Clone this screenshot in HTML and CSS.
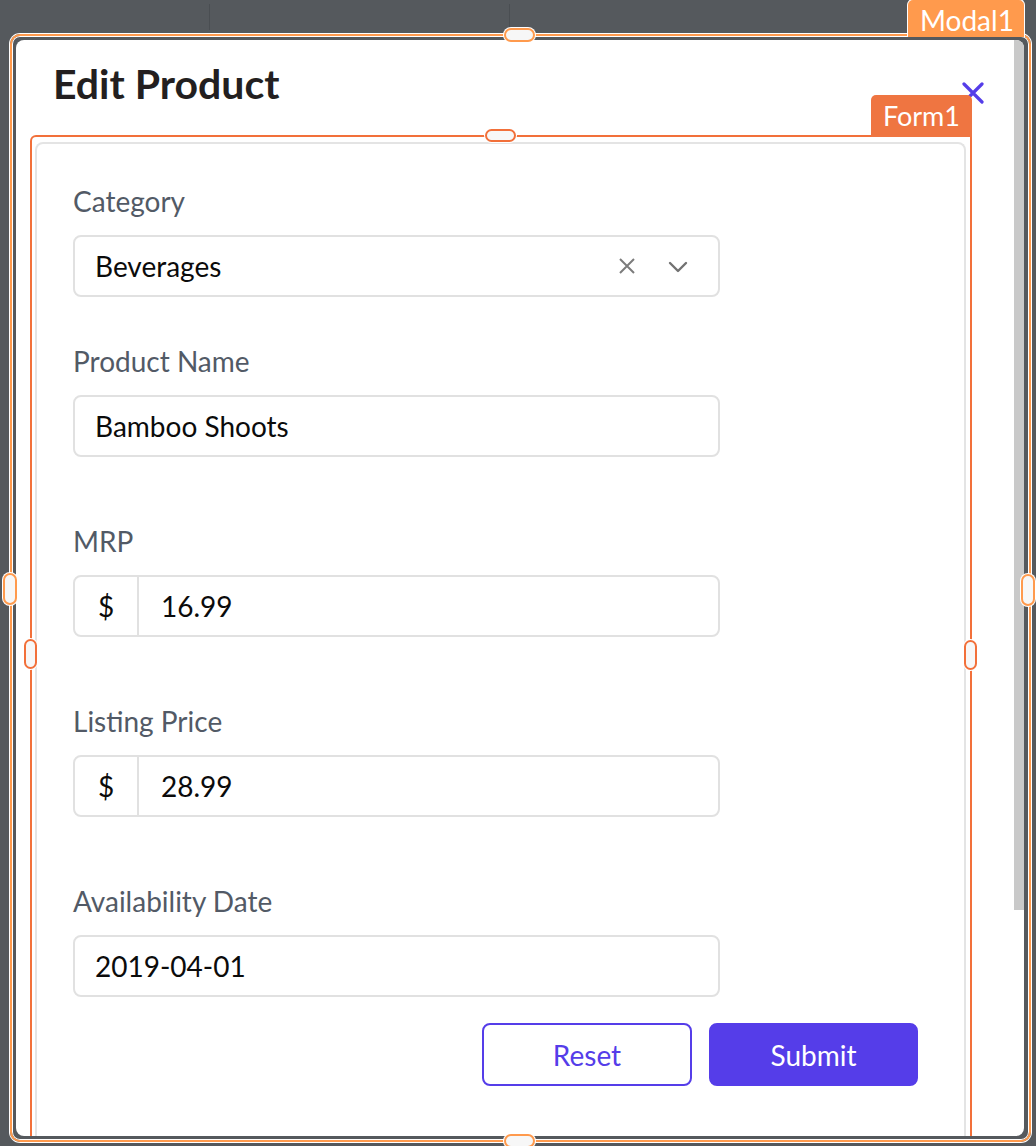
FILE: index.html
```html
<!DOCTYPE html>
<html lang="en">
<head>
<meta charset="utf-8">
<title>Edit Product</title>
<link rel="stylesheet" href="styles.css">
</head>
<body>
<div class="canvas">
  <span class="bg-line bg-line-a"></span>
  <span class="bg-line bg-line-b"></span>

  <div class="modal">
    <div class="scroll-thumb"></div>
    <div class="modal-header">
      <h1 class="title">Edit Product</h1>
      <svg class="close" width="22" height="22" viewBox="0 0 22 22"><path d="M2 2 L20 20 M20 2 L2 20" stroke="#553de9" stroke-width="3.2" stroke-linecap="round" fill="none"/></svg>
    </div>
    <div class="form-sel">
      <div class="form-tab">Form1</div>
      <div class="card">
        <div class="field field-first">
          <div class="label">Category</div>
          <div class="input">
            <span class="value">Beverages</span>
            <svg class="clear-icon" width="16" height="16" viewBox="0 0 16 16"><path d="M1 1 L15 15 M15 1 L1 15" stroke="#7c7c7c" stroke-width="2" fill="none"/></svg>
            <svg class="chev-icon" width="20" height="12" viewBox="0 0 20 12"><path d="M2 2 L10 10 L18 2" stroke="#727272" stroke-width="2.4" stroke-linecap="round" stroke-linejoin="round" fill="none"/></svg>
          </div>
        </div>
        <div class="field field-second">
          <div class="label">Product Name</div>
          <div class="input"><span class="value">Bamboo Shoots</span></div>
        </div>
        <div class="field field-rest">
          <div class="label">MRP</div>
          <div class="input">
            <span class="prefix">$</span>
            <span class="value value-prefixed">16.99</span>
          </div>
        </div>
        <div class="field field-rest">
          <div class="label">Listing Price</div>
          <div class="input">
            <span class="prefix">$</span>
            <span class="value value-prefixed">28.99</span>
          </div>
        </div>
        <div class="field field-rest">
          <div class="label">Availability Date</div>
          <div class="input"><span class="value">2019-04-01</span></div>
        </div>
        <div class="actions">
          <button class="btn btn-outline">Reset</button>
          <button class="btn btn-primary">Submit</button>
        </div>
      </div>
    </div>
  </div>

  <div class="modal-sel"></div>
  <div class="modal-tab">Modal1</div>

  <span class="handle handle-modal handle-h modal-top"></span>
  <span class="handle handle-modal handle-h modal-bottom"></span>
  <span class="handle handle-modal handle-v modal-left"></span>
  <span class="handle handle-modal handle-v modal-right"></span>
  <span class="handle handle-form handle-h form-top"></span>
  <span class="handle handle-form handle-v form-left"></span>
  <span class="handle handle-form handle-v form-right"></span>
</div>
</body>
</html>
```

FILE: styles.css
```css
* { box-sizing: border-box; }

body {
  margin: 0;
  background: #55595d;
  font-family: "Lato", "Noto Sans", sans-serif;
}

.canvas {
  position: relative;
  width: 1036px;
  height: 1146px;
  overflow: hidden;
  background: #55595d;
}

.bg-line {
  position: absolute;
  top: 4px;
  width: 1px;
  height: 26px;
  background: #4a4e52;
}
.bg-line-a { left: 209px; }
.bg-line-b { left: 509px; }

.modal {
  position: absolute;
  left: 16px;
  top: 40px;
  width: 1008px;
  height: 1096px;
  background: #fff;
  border-radius: 8px;
  overflow: hidden;
}

.scroll-thumb {
  position: absolute;
  right: 0;
  top: 0;
  width: 10px;
  height: 870px;
  background: #c9c9c9;
}

.modal-header {
  display: flex;
  justify-content: space-between;
  align-items: flex-start;
  height: 95px;
  padding: 20px 40px 0 37px;
}

.title {
  margin: 0;
  font-size: 41px;
  line-height: 48px;
  font-weight: 700;
  color: #231f20;
}

.close {
  display: block;
  margin-top: 22px;
}

.form-sel {
  position: relative;
  margin: 0 52px 0 14px;
  border: 2px solid #f2703a;
  border-bottom: none;
  border-radius: 6px 0 0 0;
  padding: 5px 4px 0 3px;
}

.form-tab {
  position: absolute;
  right: -2px;
  top: -42px;
  height: 42px;
  padding: 0 12px;
  background: #ef7541;
  color: #fff;
  font-size: 27px;
  line-height: 42px;
  border-radius: 5px 5px 0 0;
}

.card {
  border: 2px solid #e4e4e4;
  border-bottom: none;
  border-radius: 8px 8px 0 0;
  padding: 41px 36px 120px 36px;
  background: #fff;
}

.field { display: flex; flex-direction: column; }
.field-second { margin-top: 48px; }
.field-rest { margin-top: 68px; }

.label {
  font-size: 28px;
  line-height: 32px;
  color: #525a66;
  margin-bottom: 18px;
}

.input {
  display: flex;
  align-items: center;
  width: 647px;
  height: 62px;
  border: 2px solid #e1e1e1;
  border-radius: 8px;
  font-size: 28px;
  color: #0b0b0b;
  padding-right: 30px;
}

.value {
  flex: 1;
  padding-left: 20px;
}

.value-prefixed { padding-left: 22px; }

.prefix {
  width: 64px;
  align-self: stretch;
  display: flex;
  align-items: center;
  justify-content: center;
  border-right: 2px solid #e1e1e1;
}

.clear-icon { display: block; margin-right: 33px; }
.chev-icon { display: block; margin-top: 2px; }

.actions {
  display: flex;
  justify-content: flex-end;
  gap: 17px;
  margin-top: 26px;
  padding-right: 10px;
}

.btn {
  width: 210px;
  height: 63px;
  border-radius: 8px;
  font-family: inherit;
  font-size: 28px;
  cursor: pointer;
}

.btn-outline {
  background: #fff;
  border: 2px solid #553de9;
  color: #553de9;
}

.btn-primary {
  width: 209px;
  background: #553de9;
  border: 2px solid #553de9;
  color: #fff;
}

.modal-sel {
  position: absolute;
  left: 10px;
  top: 34px;
  width: 1021px;
  height: 1108px;
  border: 2px solid #ff9a4d;
  border-radius: 10px;
  box-shadow: 0 0 0 1px #fff, inset 0 0 0 1px #fff;
  pointer-events: none;
}

.modal-tab {
  position: absolute;
  left: 907px;
  top: -1px;
  width: 118px;
  height: 38px;
  background: #ff9a4d;
  color: #fff;
  font-size: 28px;
  line-height: 40px;
  padding-left: 12px;
  border: 1px solid #fff;
  border-bottom: none;
  border-radius: 6px 6px 0 0;
}

.handle {
  position: absolute;
  background: #f7f7f7;
  border: 2px solid;
  border-radius: 7px;
  box-shadow: 0 0 0 1px #fff;
}
.handle-modal { border-color: #ff9a4d; }
.handle-form { border-color: #f2703a; }
.handle-h { width: 31px; height: 14px; }
.handle-v { width: 14px; height: 32px; }

.modal-top { left: 504px; top: 28px; }
.modal-bottom { left: 504px; top: 1134px; }
.modal-left { left: 3px; top: 573px; }
.modal-right { left: 1021px; top: 574px; }
.form-top { left: 485px; top: 129px; width: 31px; height: 13px; }
.form-left { left: 24px; top: 639px; width: 13px; height: 30px; }
.form-right { left: 964px; top: 640px; width: 13px; height: 30px; }
```
